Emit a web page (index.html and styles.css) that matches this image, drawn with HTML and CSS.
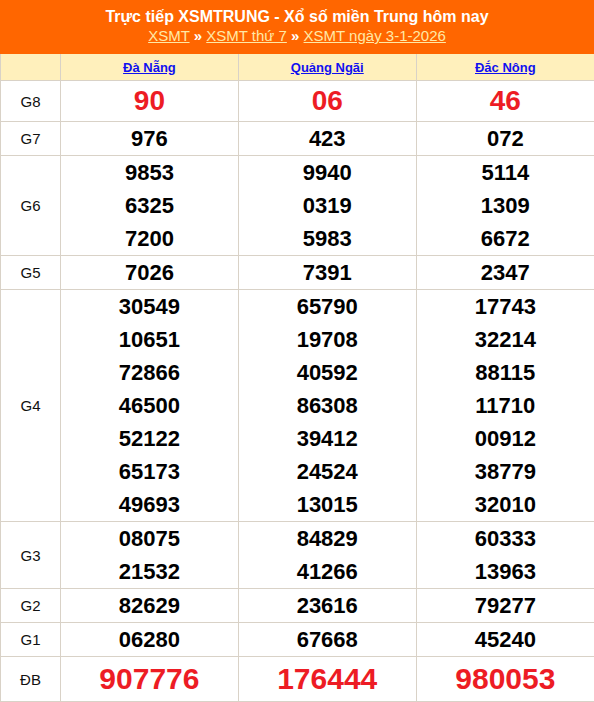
FILE: index.html
```html
<!DOCTYPE html>
<html lang="vi">
<head>
<meta charset="utf-8">
<title>XSMT</title>
<link rel="stylesheet" href="styles.css">
</head>
<body>
<div class="top">
  <h1 class="title">Trực tiếp XSMTRUNG - Xổ số miền Trung hôm nay</h1>
  <div class="crumbs"><a href="#">XSMT</a> <b>»</b> <a href="#">XSMT thứ 7</a> <b>»</b> <a href="#">XSMT ngày 3-1-2026</a></div>
</div>
<table class="kq">
  <colgroup><col class="c-lbl"><col><col><col></colgroup>
  <thead>
    <tr class="head"><th></th><th><a href="#">Đà Nẵng</a></th><th><a href="#">Quảng Ngãi</a></th><th><a href="#">Đắc Nông</a></th></tr>
  </thead>
  <tbody>
    <tr class="g8"><td class="lbl">G8</td><td><div class="n red">90</div></td><td><div class="n red">06</div></td><td><div class="n red">46</div></td></tr>
    <tr><td class="lbl">G7</td><td><div class="n">976</div></td><td><div class="n">423</div></td><td><div class="n">072</div></td></tr>
    <tr><td class="lbl">G6</td>
      <td><div class="n">9853</div><div class="n">6325</div><div class="n">7200</div></td>
      <td><div class="n">9940</div><div class="n">0319</div><div class="n">5983</div></td>
      <td><div class="n">5114</div><div class="n">1309</div><div class="n">6672</div></td></tr>
    <tr><td class="lbl">G5</td><td><div class="n">7026</div></td><td><div class="n">7391</div></td><td><div class="n">2347</div></td></tr>
    <tr><td class="lbl">G4</td>
      <td><div class="n">30549</div><div class="n">10651</div><div class="n">72866</div><div class="n">46500</div><div class="n">52122</div><div class="n">65173</div><div class="n">49693</div></td>
      <td><div class="n">65790</div><div class="n">19708</div><div class="n">40592</div><div class="n">86308</div><div class="n">39412</div><div class="n">24524</div><div class="n">13015</div></td>
      <td><div class="n">17743</div><div class="n">32214</div><div class="n">88115</div><div class="n">11710</div><div class="n">00912</div><div class="n">38779</div><div class="n">32010</div></td></tr>
    <tr><td class="lbl">G3</td>
      <td><div class="n">08075</div><div class="n">21532</div></td>
      <td><div class="n">84829</div><div class="n">41266</div></td>
      <td><div class="n">60333</div><div class="n">13963</div></td></tr>
    <tr><td class="lbl">G2</td><td><div class="n">82629</div></td><td><div class="n">23616</div></td><td><div class="n">79277</div></td></tr>
    <tr><td class="lbl">G1</td><td><div class="n">06280</div></td><td><div class="n">67668</div></td><td><div class="n">45240</div></td></tr>
    <tr class="db"><td class="lbl">ĐB</td><td><div class="n red big">907776</div></td><td><div class="n red big">176444</div></td><td><div class="n red big">980053</div></td></tr>
  </tbody>
</table>
</body>
</html>
```
FILE: styles.css
```css
html, body {
  margin: 0;
  padding: 0;
  background: #fff;
  font-family: "Liberation Sans", Arial, sans-serif;
}
.top {
  background: #ff6600;
  height: 54px;
  box-sizing: border-box;
  padding-top: 7px;
  text-align: center;
  color: #fff;
}
.title {
  margin: 0;
  font-size: 16px;
  line-height: 20px;
  font-weight: bold;
}
.crumbs {
  font-size: 15px;
  line-height: 18px;
}
.crumbs a {
  color: #ffe9a6;
  text-decoration: underline;
}
.crumbs b {
  color: #fff;
}
.kq {
  width: 594px;
  border-collapse: collapse;
  table-layout: fixed;
}
.c-lbl { width: 60px; }
.kq th, .kq td {
  border: 1px solid #d9d2c7;
  padding: 0;
  text-align: center;
  vertical-align: middle;
}
.kq tr > :last-child { border-right: none; }
.kq tr:first-child > * { border-top: none; }
.head th {
  background: #fff0bc;
  height: 26px;
  font-size: 13px;
  font-weight: bold;
}
.head a {
  color: #1010f0;
  text-decoration: underline;
}
.lbl {
  font-size: 15px;
  color: #111;
}
.n {
  font-size: 22px;
  font-weight: bold;
  line-height: 33px;
  color: #000;
}
.red { color: #ed1c24; }
.g8 .n { font-size: 28px; line-height: 40px; }
.db .n { font-size: 30px; line-height: 44px; }
```
